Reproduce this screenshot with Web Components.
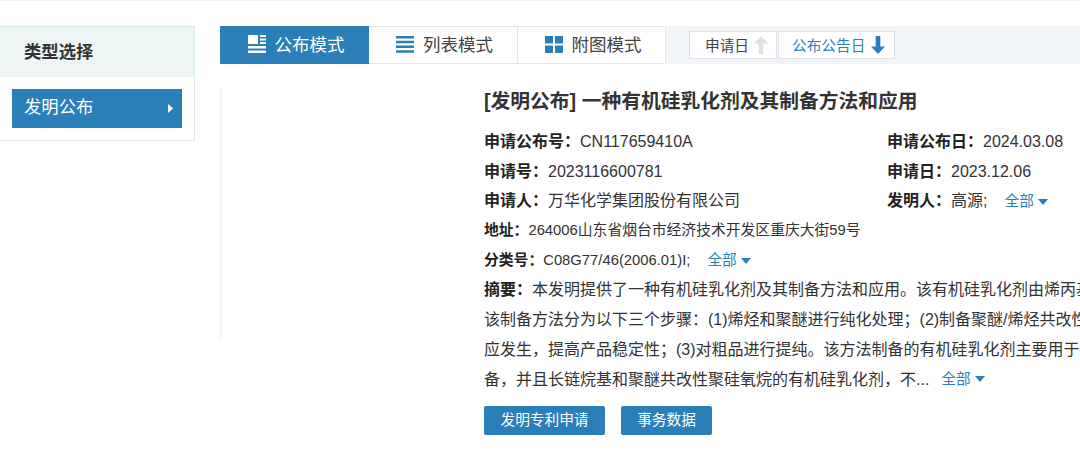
<!DOCTYPE html>
<html lang="zh"><head><meta charset="utf-8"><style>
html,body{margin:0;padding:0;background:#fff;overflow:hidden}
body{width:1080px;height:454px;font-family:"Liberation Sans","Noto Sans CJK SC",sans-serif;color:#333;border-top:1px solid #eef5f5;box-sizing:border-box}
</style></head><body>
<patent-page></patent-page>
<template id="t-page"><style>
:host{display:flex;width:1080px;height:453px;overflow:hidden;padding-top:25px;box-sizing:border-box}
.main{flex:none;width:860px;margin-left:25px;display:flex;flex-direction:column}
</style>
<type-side></type-side>
<div class="main"><mode-bar></mode-bar><patent-card></patent-card></div></template>

<template id="t-side"><style>
:host{display:block;flex:none;width:195px;height:115px;box-sizing:border-box;border:1px solid #dde9f3;border-left:0;}
.h{height:50px;background:#edf6f5;padding-left:24px;font:bold 17.330px/50px "Liberation Sans","Noto Sans CJK SC",sans-serif;color:#333}
.i{margin:12px 12px 0;height:39px;background:#2a7fb8;color:#fff;display:flex;align-items:center;justify-content:space-between;padding:0 9px 0 12px;font-size:17.330px;box-sizing:border-box}
.i span{position:relative;top:-3px}
.i svg{display:block}
</style><div class="h">类型选择</div><div class="i"><span>发明公布</span><svg width="5" height="9" viewBox="0 0 5 9"><path d="M0 0l5 4.500-5 4.500z" fill="#fff"/></svg></div></template>

<template id="t-bar"><style>
:host{display:flex;height:38px;background:#f1f4f9;flex:none}
.t{box-sizing:border-box;height:38px;width:149px;display:flex;align-items:center;justify-content:center;gap:9px;font-size:17.500px;color:#444;background:#fff;border:1px solid #e3e6ea;border-left:0;padding:0 0 2px 3px}
.t span{position:relative;top:-1px}
.t.a{background:#2a7fb8;color:#fff;border:0}
.s{display:flex;margin:5px 0 0 23px;height:28px}
.b{box-sizing:border-box;height:28px;background:#fff;border:1px solid #dfe2e6;display:flex;align-items:center;font-size:14.670px;color:#444;padding-left:15px;gap:5px}
.b span{position:relative;top:-1px}
.b+.b{margin-left:1px;padding-left:13px;gap:6px}
.b.on{color:#2a7fb8}
svg{display:block;flex:none}
</style>
<div class="t a"><svg width="18" height="18" viewBox="0 0 18 18" fill="#fff"><path d="M0 0h10v9H0zM12 0h6v2h-6zM12 3.500h6v2h-6zM12 7h6v2h-6zM0 11h18v2.500H0zM0 15.500h18V18H0z"/></svg><span>公布模式</span></div>
<div class="t" style="width:149px"><svg width="18" height="17" viewBox="0 0 18 17" fill="#2a7fb8"><path d="M0 0h18v2.500H0zM0 4.700h18v2.500H0zM0 9.400h18v2.500H0zM0 14.200h18v2.500H0z"/></svg><span>列表模式</span></div>
<div class="t" style="width:148px"><svg width="18" height="17" viewBox="0 0 18 17" fill="#2a7fb8"><path d="M0 0h8v7.500H0zM10 0h8v7.500h-8zM0 9.500h8V17H0zM10 9.500h8V17h-8z"/></svg><span>附图模式</span></div>
<div class="s">
<div class="b" style="width:88px"><span>申请日</span><svg width="14" height="18" viewBox="0 0 14 18"><path d="M7 0l7 7.500H9.300V18H4.700V7.500H0z" fill="#e1e1e1"/></svg></div>
<div class="b on" style="width:117px"><span>公布公告日</span><svg width="14" height="18" viewBox="0 0 14 18"><path d="M7 18l7-7.500H9.300V0H4.700v10.500H0z" fill="#2a7fb8"/></svg></div>
</div></template>

<template id="t-card"><style>
:host{display:flex;flex:1;min-height:0;align-items:flex-start}
.pic{flex:none;width:264px;height:249px;box-sizing:border-box;margin-top:25px;border-left:2px solid #f1f2f4}
.c{flex:none;width:596px;overflow:hidden;padding-top:22px;color:#333}
h3{margin:0 0 11px;font:bold 19.750px/30px "Liberation Sans","Noto Sans CJK SC",sans-serif;color:#333;white-space:nowrap}
.r{display:flex;white-space:nowrap;height:29.700px;line-height:29.700px;font-size:16px}
.r>div{flex:none}.r>div:first-child{width:403px}
b{color:#222}
.s{font-size:14.800px}
.more{color:#2a7fb8;margin-left:17px;display:inline-flex;align-items:center;gap:4px;font-size:14.670px}
.more.n{margin-left:12px}
.more i{display:inline-block;border:5px solid transparent;border-top:6px solid #2a7fb8;border-bottom:0}
.btns{display:flex;gap:16px;margin-top:12px}
.btn{height:29px;box-sizing:border-box;background:#2a7fb8;color:#fff;font-size:14.670px;line-height:28px;text-align:center;border-radius:2px}
</style>
<div class="pic"></div>
<div class="c">
<h3>[发明公布] 一种有机硅乳化剂及其制备方法和应用</h3>
<div class="r"><div><b>申请公布号：</b>CN117659410A</div><div><b>申请公布日：</b>2024.03.08</div></div>
<div class="r"><div><b>申请号：</b>2023116600781</div><div><b>申请日：</b>2023.12.06</div></div>
<div class="r"><div><b>申请人：</b>万华化学集团股份有限公司</div><div><b>发明人：</b>高源;<span class="more"><span>全部</span><i></i></span></div></div>
<div class="r s"><div><b>地址：</b>264006山东省烟台市经济技术开发区重庆大街59号</div></div>
<div class="r s"><div><b>分类号：</b>C08G77/46(2006.01)I;<span class="more"><span>全部</span><i></i></span></div></div>
<div class="r"><b>摘要：</b>本发明提供了一种有机硅乳化剂及其制备方法和应用。该有机硅乳化剂由烯丙基</div>
<div class="r">该制备方法分为以下三个步骤：(1)烯烃和聚醚进行纯化处理；(2)制备聚醚/烯烃共改性</div>
<div class="r">应发生，提高产品稳定性；(3)对粗品进行提纯。该方法制备的有机硅乳化剂主要用于</div>
<div class="r">备，并且长链烷基和聚醚共改性聚硅氧烷的有机硅乳化剂，不...<span class="more n"><span>全部</span><i></i></span></div>
<div class="btns"><div class="btn" style="width:121px">发明专利申请</div><div class="btn" style="width:91px">事务数据</div></div>
</div></template>
<script>
for (const [tag,id] of [['patent-page','t-page'],['type-side','t-side'],['mode-bar','t-bar'],['patent-card','t-card']]) {
  customElements.define(tag, class extends HTMLElement {
    constructor(){super();this.attachShadow({mode:'open'}).appendChild(document.getElementById(id).content.cloneNode(true));}
  });
}
</script>
</body></html>
